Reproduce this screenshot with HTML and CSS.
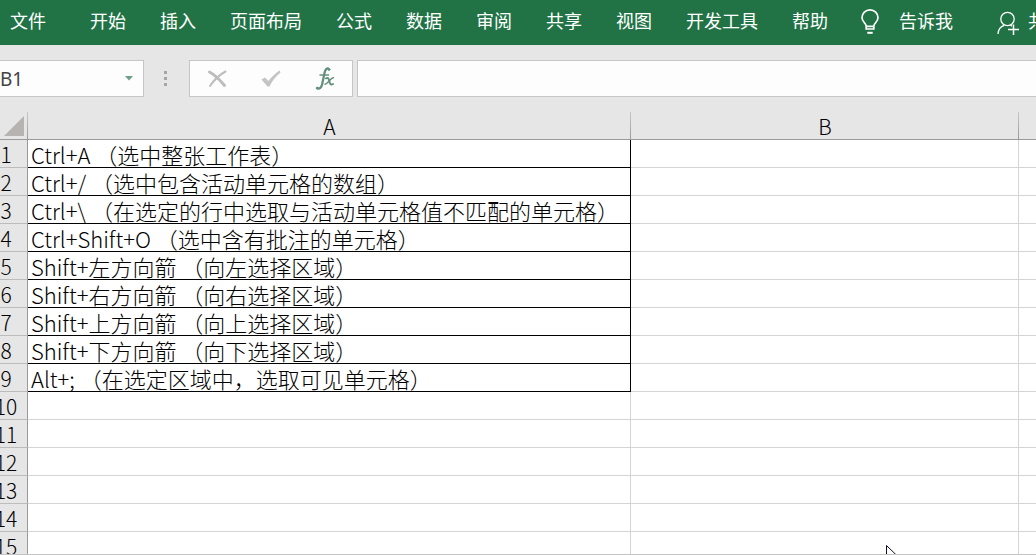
FILE: index.html
```html
<!DOCTYPE html>
<html lang="zh-CN">
<head>
<meta charset="utf-8">
<title>工作表</title>
<link rel="stylesheet" href="styles.css">
</head>
<body>
<div class="app">
  <nav class="ribbon">
    <button class="tab tab-file">文件</button>
    <button class="tab">开始</button>
    <button class="tab">插入</button>
    <button class="tab">页面布局</button>
    <button class="tab">公式</button>
    <button class="tab">数据</button>
    <button class="tab">审阅</button>
    <button class="tab">共享</button>
    <button class="tab">视图</button>
    <button class="tab">开发工具</button>
    <button class="tab">帮助</button>
    <button class="tab tell">
      <svg width="18" height="26" viewBox="0 0 18 26" fill="none" stroke="#fff" stroke-width="1.7" aria-hidden="true">
        <path d="M5.2 20v-3.2C4.8 14.200 1 12.500 1 8.700A8 7.800 0 0 1 17 8.700C17 12.500 13.200 14.200 12.800 16.800V20zM5 17.400h8"/>
        <path d="M6.300 23.800h5.400" stroke-width="2"/>
      </svg>
      <span>告诉我</span>
    </button>
    <button class="tab share">
      <svg width="23" height="25" viewBox="0 0 23 25" fill="none" stroke="#fff" stroke-width="1.300" aria-hidden="true">
        <circle cx="10.500" cy="8" r="6.700"/>
        <path d="M1 23c.3-4.500 2.800-7.500 6.200-8.600M13.500 14.300l1.500 1"/>
        <path d="M16.500 13.500v10.500M11 18.500h11" stroke-width="1.500"/>
      </svg>
      <span>共享</span>
    </button>
  </nav>

  <div class="formula-bar">
    <div class="name-box">
      <input class="name-input" type="text" value="B1" aria-label="名称框">
      <button class="drop" aria-label="展开名称框">
        <svg width="8" height="5" viewBox="0 0 8 5"><path d="M0 0h8L4 4.500z" fill="#6d9e87"/></svg>
      </button>
    </div>
    <div class="grip"><i></i><i></i><i></i></div>
    <div class="tools">
      <button class="tool" aria-label="取消">
        <svg width="19" height="18" viewBox="0 0 19 18" fill="none" stroke="#bdbdbd" stroke-linecap="round"><path d="M1.500 2C7 5 12 10 16.500 15.500" stroke-width="2.900"/><path d="M17.500 1.500C11 5 6 10 2 16" stroke-width="2"/></svg>
      </button>
      <button class="tool" aria-label="输入">
        <svg width="20" height="17" viewBox="0 0 20 17"><path d="M.5 9.500L4 7.500l3.500 3.500C10.500 7 14.500 3 18.500.5l1 2C15 6 11 11 8.500 16.500H6.500z" fill="#c4c4c4"/></svg>
      </button>
      <button class="tool" aria-label="插入函数">
        <svg width="20" height="24" viewBox="0 0 20 24" fill="none" stroke="#64907e" stroke-linecap="round">
          <path d="M5 8h8.500" stroke-width="1.500"/>
          <path d="M14.200 2.300C12 .3 10.200 2.500 9.500 6L7.200 17C6.500 20.500 4.500 22.500 2 21.200" stroke-width="2.300"/>
          <circle cx="14" cy="2.600" r=".8" fill="#64907e"/>
          <circle cx="2.200" cy="20.900" r=".8" fill="#64907e"/>
          <path d="M11 11.300c2.300-1 2.800.5 3.300 2.800.5 2.500 1.200 4.300 3.700 2.900" stroke-width="2"/>
          <path d="M18.500 10.800c-2.500-.2-6 6.400-8.500 6.500" stroke-width="1.400"/>
        </svg>
      </button>
    </div>
    <input class="formula" type="text" aria-label="编辑栏">
  </div>

  <main class="sheet">
    <table class="grid">
      <colgroup><col class="col-head"><col class="col-a"><col class="col-b"><col></colgroup>
      <thead>
        <tr>
          <th class="corner"><svg width="20" height="20" viewBox="0 0 20 20" aria-hidden="true"><path d="M20 0v20H0z" fill="#b7b3b0"/></svg></th>
          <th scope="col">A</th><th scope="col">B</th><th scope="col"></th>
        </tr>
      </thead>
      <tbody>
        <tr><th scope="row">1</th><td class="filled">Ctrl+A （选中整张工作表）</td><td></td><td></td></tr>
        <tr><th scope="row">2</th><td class="filled">Ctrl+/ （选中包含活动单元格的数组）</td><td></td><td></td></tr>
        <tr><th scope="row">3</th><td class="filled">Ctrl+\ （在选定的行中选取与活动单元格值不匹配的单元格）</td><td></td><td></td></tr>
        <tr><th scope="row">4</th><td class="filled">Ctrl+Shift+O （选中含有批注的单元格）</td><td></td><td></td></tr>
        <tr><th scope="row">5</th><td class="filled">Shift+左方向箭 （向左选择区域）</td><td></td><td></td></tr>
        <tr><th scope="row">6</th><td class="filled">Shift+右方向箭 （向右选择区域）</td><td></td><td></td></tr>
        <tr><th scope="row">7</th><td class="filled">Shift+上方向箭 （向上选择区域）</td><td></td><td></td></tr>
        <tr><th scope="row">8</th><td class="filled">Shift+下方向箭 （向下选择区域）</td><td></td><td></td></tr>
        <tr><th scope="row">9</th><td class="filled">Alt+; （在选定区域中，选取可见单元格）</td><td></td><td></td></tr>
        <tr><th scope="row">10</th><td></td><td></td><td></td></tr>
        <tr><th scope="row">11</th><td></td><td></td><td></td></tr>
        <tr><th scope="row">12</th><td></td><td></td><td></td></tr>
        <tr><th scope="row">13</th><td></td><td></td><td></td></tr>
        <tr><th scope="row">14</th><td></td><td></td><td></td></tr>
        <tr><th scope="row">15</th><td></td><td></td><td></td></tr>
      </tbody>
    </table>
  </main>
  <svg class="pointer" width="18" height="26" viewBox="0 0 18 26" aria-hidden="true"><path d="M.5.500v20l5-4.500 3 7 3-1.500-3-6.500h7z" fill="#fff" stroke="#0b0b2a"/></svg>
</div>
</body>
</html>
```

FILE: styles.css
```css
* { box-sizing: border-box; }

body {
  margin: 0;
  font-family: "Noto Sans CJK SC", sans-serif;
  color: #000;
}

button, input { font: inherit; border: 0; padding: 0; background: none; }

.app {
  position: relative;
  display: flex;
  flex-direction: column;
  height: 100vh;
  overflow: hidden;
  background: #e6e6e6;
  border-bottom: 1px solid #c4c4c4;
}

/* Ribbon tabs */
.ribbon {
  display: flex;
  flex: none;
  gap: 34px;
  height: 45px;
  padding: 0 0 6px 10px;
  background: #217346;
  overflow: hidden;
}

.tab {
  display: flex;
  flex: none;
  align-items: center;
  color: #fff;
  font-size: 18px;
  line-height: 24px;
  white-space: nowrap;
}

.tab-file { margin-right: 10px; }
.tell { gap: 20px; margin-left: -1px; }
.tell svg { margin-top: 4px; }
.share { gap: 8px; margin-left: 10px; }
.share svg { margin-top: 8px; }

/* Formula bar */
.formula-bar {
  display: flex;
  flex: none;
  height: 67px;
  padding: 15px 0;
}

.name-box {
  display: flex;
  align-items: center;
  width: 144px;
  background: #fdfdfd;
  border: 1px solid #c6c6c6;
  border-left: 0;
}

.name-input {
  flex: 1;
  min-width: 0;
  color: #444;
  font-family: "Noto Sans", sans-serif;
  font-size: 19px;
}

.drop { display: flex; padding: 0 10px; }

.grip {
  display: flex;
  flex-direction: column;
  align-items: center;
  justify-content: center;
  gap: 3px;
  width: 45px;
  padding-right: 2px;
}

.grip i { width: 3px; height: 3px; background: #a6a6a6; }

.tools {
  display: flex;
  width: 164px;
  margin-right: 4px;
  background: #fdfdfd;
  border: 1px solid #c6c6c6;
}

.tool {
  display: flex;
  flex: 1;
  align-items: center;
  justify-content: center;
}

.formula {
  flex: 1;
  min-width: 0;
  padding: 0 8px;
  font-size: 18px;
  background: #fdfdfd;
  border: 1px solid #c6c6c6;
  border-right: 0;
}

/* Sheet: the row headings run past the left edge of the window */
.sheet { flex: 1; min-height: 0; overflow: hidden; }

.grid {
  width: calc(100% + 15px);
  margin-left: -15px;
  table-layout: fixed;
  border-collapse: separate;
  border-spacing: 0;
  background: #fff;
  font-size: 22px;
  font-weight: 300;
  line-height: 25px;
}

.col-head { width: 43px; }
.col-a { width: 603px; }
.col-b { width: 388px; }

.grid th, .grid td {
  height: 28px;
  padding: 2px 0 0;
  border-right: 1px solid #d4d4d4;
  border-bottom: 1px solid #d4d4d4;
  white-space: nowrap;
}

.grid th {
  background: #e6e6e6;
  font-size: 21px;
  font-weight: 300;
}

.grid thead th {
  background: linear-gradient(#c8c8c8, #999) right / 1px 100% no-repeat #e6e6e6;
  border-right: 0;
  border-bottom-color: #999;
}

.grid tbody th {
  border-right-color: #999;
  border-bottom-color: #bcbcbc;
}

.grid thead th:last-child { background: #e6e6e6; }
.grid td:last-child { border-right: 0; }

.grid .corner { padding: 4px 4px 3px 0; text-align: right; line-height: 0; }
.corner svg { display: inline-block; vertical-align: top; }

.grid .filled {
  padding-left: 3px;
  border-color: #000;
}

.pointer { position: absolute; left: 886px; top: 545px; }
```
